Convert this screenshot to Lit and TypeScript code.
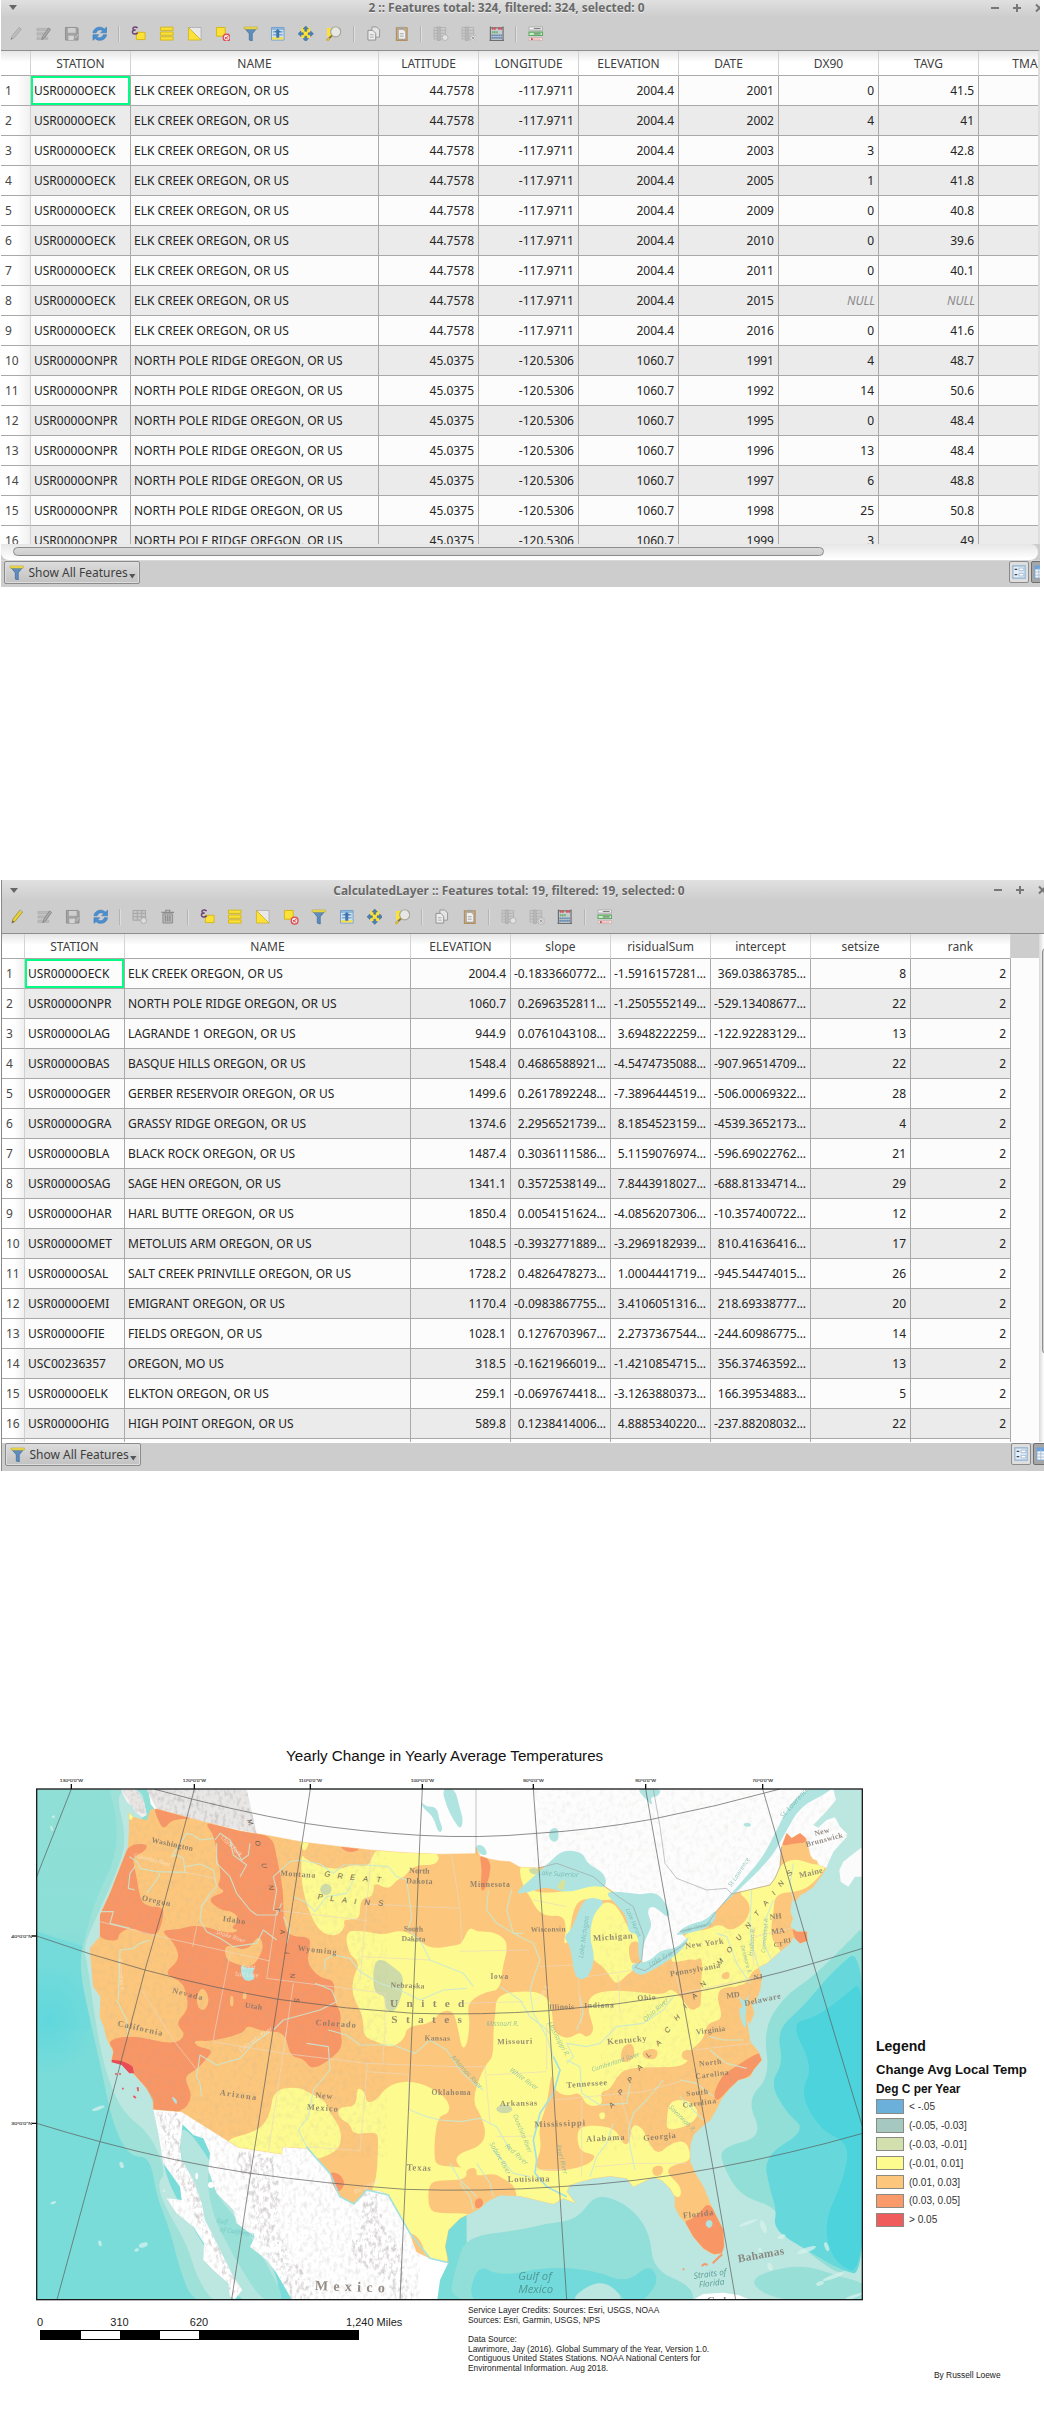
import { LitElement, html, svg, css } from "lit";
import { customElement, property } from "lit/decorators.js";

type Row = string[];

const ICONS: Record<string, any> = {
  pencilOff: svg`<path d="M3 14 L4 10.5 L11.5 1.5 L13.8 3.3 L6.3 12.3Z" fill="#bdbdbd" stroke="#a2a2a2" stroke-width=".8"/><path d="M3 14l.6-2 1.2 1z" fill="#777"/>`,
  pencil: svg`<path d="M3 14.5 L4 10.5 L11.5 1 L14 3 L6.5 12.5Z" fill="#e6d338" stroke="#9b8b2c" stroke-width=".8"/><path d="M11 1.6 12.2.6 14.5 2.4 13.6 3.6z" fill="#b9bcae"/><path d="M3 14.5l.8-2.6 1.8 1.2z" fill="#5b5b4d"/>`,
  multi: svg`<path d="M1 2.5h12v2.4H1zM1 7h10v2.4H1zM1 11.5h11v2.4H1z" fill="#bababa" stroke="#a8a8a8" stroke-width=".6"/><path d="M6 14l1-3.5L13 2l2 1.5L9 12z" fill="#aaa" stroke="#808080" stroke-width=".8"/>`,
  save: svg`<path d="M1.5 1.5h12l1 1v12h-13z" fill="#a2a2a2" stroke="#8e8e8e"/><path d="M4 2h8v5H4z" fill="#cfcfcf"/><path d="M4.500 10h6v4.500h-6z" fill="#d4d4d4"/><path d="M10 14l1-3 3.500-3.500 1.500 1.500L12.500 13z" fill="#b8b8b8" stroke="#8a8a8a" stroke-width=".5"/>`,
  refresh: svg`<path d="M1 7C1.500 3 5 1 8.500 1.200c2 .1 3.400 1 4.300 2L15 1.200V7H9l2-2C9 3 5.500 3.600 4.300 7zM15 9c-.5 4-4 6-7.500 5.800-2-.1-3.400-1-4.300-2L1 14.800V9h6l-2 2c2 2 5.500 1.400 6.700-2z" fill="#4b8fd0" stroke="#3a78b8" stroke-width=".6"/>`,
  tableOff: svg`<path d="M1 1.500h13v10H1z" fill="#c6c6c6" stroke="#a5a5a5"/><path d="M1 4.500h13M1 8h13M5.500 1.500v10M10 1.500v10" stroke="#a5a5a5"/><circle cx="12" cy="12" r="3" fill="#ddd" stroke="#aaa"/>`,
  trash: svg`<path d="M3 5h10v9.500H3z" fill="#b7b7b7" stroke="#8d8d8d"/><path d="M5.700 6.500V13M8 6.500V13M10.300 6.500V13M1.500 3.500h13M6 3V1.300h4V3" fill="none" stroke="#8b8b8b" stroke-width="1.200"/>`,
  epsilon: svg`<path d="M5.500 6.500h9v7.500h-9z" fill="#fbe13a" stroke="#d5b813"/><path d="M6.800 2C4-.2 1.500 1.500 2.200 3.300 2.600 4.200 4 4.200 4.800 4.200 2.500 4.200 1.200 5 1.500 6.600 2 8.900 5.500 8.800 7 7" fill="none" stroke="#6c3f73" stroke-width="1.500"/>`,
  selectAll: svg`<path d="M1.500 1.200h13v3.300h-13zM1.500 6.200h13v3.300h-13zM1.500 11.200h13v3.300h-13z" fill="#fbe13a" stroke="#d5b813"/>`,
  invert: svg`<path d="M1.500 1.500h13v13z" fill="#e9e9e9" stroke="#aaa" stroke-width=".8"/><path d="M1.500 1.500l13 13h-13z" fill="#fbe13a" stroke="#cfb31c" stroke-width=".8"/>`,
  deselect: svg`<path d="M1.500 1.500h9v9h-9z" fill="#fbe13a" stroke="#d5b813"/><circle cx="12" cy="12" r="3.500" fill="#f5dede" stroke="#d94b50" stroke-width="1.300"/><path d="M10 14l4-4M10.300 11.500l3 2" stroke="#d94b50"/>`,
  filter: svg`<path d="M1.500 2h13l-5 6v7.500l-3-1V8z" fill="#5f8dbd" stroke="#416f9f" stroke-width=".8"/><path d="M1.200 1h13.600v2.200H1.200z" fill="#f5e050" stroke="#bba92c" stroke-width=".6"/>`,
  moveTop: svg`<path d="M1.500 1.500h13v13h-13z" fill="#cfe0ee" stroke="#6fa0cc"/><path d="M1.500 3h13M3 6h10M3 9h10" stroke="#7ba9d2" stroke-width="1.500"/><path d="M2 11.500h12V14H2z" fill="#f4de50"/><path d="M8 3l3.500 3.500h-2V12h-3V6.500h-2z" fill="#3f75aa"/>`,
  pan: svg`<path d="M3.500 1.500h9v11h-9z" fill="#fbe13a"/><path d="M8 0l2.800 3H9v2.500H7V3H5.200zM8 16l2.800-3H9v-2.500H7V13H5.200zM0 8l3-2.800V7h2.500v2H3v1.800zM16 8l-3-2.800V7h-2.500v2H13v1.800z" fill="#4b80b7" stroke="#34618f" stroke-width=".5"/>`,
  zoom: svg`<path d="M1 2h7v9H1z" fill="#fbe13a"/><circle cx="10" cy="6" r="5.200" fill="#e7e8e3" stroke="#a5a79d" stroke-width="1.200"/><path d="M6 10l-5 5" stroke="#83713b" stroke-width="2"/><path d="M3.500 12.500l-3 3" stroke="#e0bd34" stroke-width="2"/>`,
  copy: svg`<path d="M6 1h5l3 3v7.500H6z" fill="#e4e4e4" stroke="#979797"/><path d="M2 4.500h5l3 3v7H2z" fill="#ededed" stroke="#8e8e8e"/><path d="M4 9h4M4 11.500h4" stroke="#aaa"/>`,
  paste: svg`<path d="M2.500 1.800h11v13h-11z" fill="#c7ad88" stroke="#b18f60" stroke-width="1.200"/><path d="M4.500 3.500h5l2.500 2.500v7.500H4.500z" fill="#f0f0f0" stroke="#999" stroke-width=".7"/><path d="M5.500.8h5v2.400h-5z" fill="#a5a5a0"/><path d="M6 8h4M6 10.500h4" stroke="#a2a2a2"/>`,
  colAdd: svg`<path d="M1 1.500h12v12H1z" fill="#c9c9c9" stroke="#b4b4b4"/><path d="M1 4.500h12M1 7.500h12M1 10.500h12" stroke="#b3b3b3"/><path d="M4.500 1h3v14h-3z" fill="#b8b8b8" stroke="#a6a6a6" stroke-width=".6"/><circle cx="12.500" cy="12" r="3" fill="#e3e3e3" stroke="#b5b5b5"/>`,
  colDel: svg`<path d="M1 1.500h12v12H1z" fill="#c9c9c9" stroke="#b4b4b4"/><path d="M1 4.500h12M1 7.500h12M1 10.500h12" stroke="#b3b3b3"/><path d="M4.500 1h3v14h-3z" fill="#b8b8b8" stroke="#a6a6a6" stroke-width=".6"/><path d="M9.500 9.500h6v6h-6z" fill="#ddd" stroke="#aaa" stroke-width=".6"/><path d="M11 11l3 3M14 11l-3 3" stroke="#999"/>`,
  abacus: svg`<path d="M1.500 .5v15M14.500 .5v15M.5 14.800h15M1.500 2h13" stroke="#6d7072" stroke-width="1.300"/><path d="M2.500 3h11v11h-11z" fill="#c5cbd0"/><path d="M3 2.700h4M9.500 2.700h4" stroke="#d94d50" stroke-width="2.200" stroke-dasharray="1.700 .5"/><path d="M3 6.500h6" stroke="#69b26e" stroke-width="2.200" stroke-dasharray="1.700 .5"/><path d="M2.500 9.800h11M2.500 12.300h11" stroke="#5a83ad" stroke-width="1.800" stroke-dasharray="1.500 .5"/>`,
  conditional: svg`<path d="M1 1h14v3.200H1z" fill="#f4f4f4" stroke="#a9a9a9" stroke-width=".9"/><path d="M6 2.600h7" stroke="#6a6a6a" stroke-width=".9"/><path d="M1 6.300h14v3.600H1z" fill="#c4f0c2" stroke="#62a866" stroke-width="1.100"/><path d="M6 8.100h7" stroke="#7f9f82" stroke-width="1.800"/><path d="M1 12h14v3H1z" fill="#fbe6e6" stroke="#c9b4b4" stroke-width=".9"/><path d="M3 13.500h2" stroke="#b81a1a" stroke-width="1.400"/><path d="M5 13.500h8" stroke="#eb9a9a" stroke-width=".9"/>`,
  form: svg`<path d="M1 1h14v14H1z" fill="#e4eef8" stroke="#8fb0d0" stroke-width="1.300"/><path d="M3 5h3M3 11h3" stroke="#444" stroke-width="1.500"/><path d="M8 3.500h5.500v3H8zM8 9.500h5.500v3H8z" fill="#fff" stroke="#9bb6d2"/>`,
  grid: svg`<path d="M1 1h14v14H1z" fill="#f2f6fa" stroke="#6f9fd0"/><path d="M1 1h14v4H1z" fill="#6ca3dc"/><path d="M1 8h14M1 11.500h14M5.500 3v12M10 3v12" stroke="#a9bdd0"/>`,
};

const icon = (n: string) => html`<svg class="ico" viewBox="0 0 16 16">${ICONS[n]}</svg>`;

@customElement("attribute-table")
export class AttributeTable extends LitElement {
  @property() title = "";
  @property() variant = "first";
  @property({ attribute: false }) tools: string[] = [];
  @property({ attribute: false }) columns: string[] = [];
  @property({ attribute: false }) rows: Row[] = [];

  static styles = css`
    :host { display: block; font-family: "Noto Sans", sans-serif; font-size: 12px; color: #242424; }
    .win { display: flex; flex-direction: column; background: #cdcdcd; overflow: hidden; margin-left: 1px; }
    .first { width: 1039px; height: 587px; }
    .second { width: 1042px; height: 591px; border-left: 1px solid #898989; }
    .bar { height: 17px; flex: none; display: grid; grid-template-columns: 106px 1fr 134px; background: linear-gradient(#e0e0e0, #cdcdcd); }
    .second .bar { height: 21px; }
    .name { text-align: center; font-weight: 700; font-size: 11.900px; color: #696969; text-shadow: 0 1px 0 #eee; line-height: 15px; white-space: nowrap; }
    .second .name { line-height: 21px; }
    .tri { width: 8px; height: 5px; margin: 5px 0 0 8px; background: #666; clip-path: polygon(0 0, 100% 0, 50% 100%); }
    .second .tri { margin: 8px 0 0 8px; }
    .ctl { display: flex; justify-content: flex-end; height: 15px; margin-right: -10px; }
    .second .ctl { height: 20px; margin-right: -9px; }
    .ctl svg { width: 22px; height: 20px; flex: none; align-self: center; }
    .tools { height: 33px; flex: none; display: flex; align-items: center; padding-left: 1px; }
    .second .tools { height: 32px; }
    .btn { width: 27.850px; display: flex; justify-content: center; flex: none; }
    .ico { width: 15.500px; height: 15.500px; display: block; }
    .sep { width: 11.700px; display: flex; justify-content: center; flex: none; }
    .sep i { width: 1px; height: 16px; background: #b4b4b4; border-right: 1px solid #dedede; }
    .body { border-top: 1px solid #8e8e8e; display: flex; overflow: hidden; flex: none; background: #fcfcfc; }
    .first .body { height: 493px; width: 1037px; border-right: 2px solid #dedede; }
    .second .body { height: 508px; }
    .grid { flex: none; }
    .row { display: grid; height: 30px; }
    .first .row { grid-template-columns: 30px 100px 248px repeat(7, 100px); }
    .second .row { grid-template-columns: 23px 100px 286px repeat(6, 100px); }
    .row.head { height: 25px; background: linear-gradient(#e6e6e6, #fff 11px); }
    .c { border-right: 1px solid #a9a9a9; border-bottom: 1px solid #a9a9a9; padding: 0 3px; line-height: 29px; white-space: pre; box-sizing: border-box; overflow: hidden; background: #fcfcfc; }
    .row:nth-child(odd) .c { background: #ebebeb; }
    .row.head .c { background: none; text-align: center; line-height: 25px; color: #3e3e3e; border-right-color: #d3d3d3; }
    .row .c.idx { background: linear-gradient(90deg, #fff 55%, #f0f0f0); padding-left: 4px; border-right-color: #d0d0d0; color: #484848; }
    .num { text-align: right; padding-right: 4px; }
    .null { text-align: right; font-style: italic; color: #8a8a8a; }
    .c.cur { box-shadow: inset 0 0 0 2px #04fb84; }
    .fill { width: 28px; height: 24px; background: #cdcdcd; }
    .vbar { width: 5px; margin-left: auto; background: linear-gradient(90deg, #d8d8d8, #fff); }
    .vthumb { margin: 14px 0 0 3px; width: 6px; height: 404px; border: 1px solid #8c8c8c; border-radius: 5px; background: #d6d6d6; }
    .hbar { height: 15px; width: 1037px; flex: none; border-radius: 0 8px 8px 8px; background: linear-gradient(#e6e6e6, #fff); border-bottom: 1px solid #fff; }
    .hthumb { margin: 3px 0 0 12px; width: 809px; height: 7px; border: 1px solid #8a8a8a; border-radius: 5px; background: linear-gradient(#dadada, #cdcdcd); }
    .status { flex: 1; display: flex; align-items: flex-start; padding: 0 0 0 3px; border-top: 1px solid #d8d8d8; }
    .second .status { border-top-color: #fff; }
    .show { width: 134px; height: 21px; border: 1px solid #8b8b8b; border-radius: 2px; background: linear-gradient(#dcdcdc, #c2c2c2); display: flex; align-items: center; color: #3e3e3e; box-shadow: inset 0 0 0 1px #ddd; white-space: nowrap; }
    .show .ico { margin: 0 4px 0 4px; flex: none; }
    .drop { width: 7px; height: 5px; background: #555; clip-path: polygon(0 0, 100% 0, 50% 100%); margin: 7px 0 0 1px; flex: none; }
    .views { display: flex; gap: 2px; margin-left: auto; margin-right: -11px; }
    .second .views { margin-right: -9px; }
    .view { width: 18px; height: 20px; border: 1px solid #8b8b8b; border-radius: 2px; background: #dedede; display: flex; align-items: center; justify-content: center; flex: none; }
    .view .ico { width: 14px; height: 14px; }
    .view.on { background: #a6a6a6; border-color: #6f6f6f; }
  `;

  private cell(v: string, i: number, r: number) {
    if (v === "NULL") return html`<div class="c null">${v}</div>`;
    const cls = i === 0 ? "c idx" : i < 3 ? "c" : "c num";
    return html`<div class="${cls}${r === 0 && i === 1 ? " cur" : ""}">${v}</div>`;
  }

  render() {
    const second = this.variant === "second";
    return html`<div class="win ${this.variant}">
      <div class="bar"><div class="tri"></div><div class="name">${this.title}</div>
        <div class="ctl">
          <svg viewBox="0 0 22 20"><path d="M7 10h8" stroke="#777" stroke-width="2"/></svg>
          <svg viewBox="0 0 22 20"><path d="M7 10h8M11 6v8" stroke="#777" stroke-width="2"/></svg>
          <svg viewBox="0 0 22 20"><path d="M8 6.500l7 7M15 6.500l-7 7" stroke="#777" stroke-width="2"/></svg>
        </div></div>
      <div class="tools">${this.tools.map((t) => t === "|" ? html`<div class="sep"><i></i></div>` : html`<div class="btn">${icon(t)}</div>`)}</div>
      <div class="body">
        <div class="grid">
          <div class="row head"><div class="c"></div>${this.columns.map((c) => html`<div class="c">${c}</div>`)}</div>
          ${this.rows.map((row, r) => html`<div class="row">${[String(r + 1), ...row].map((v, i) => this.cell(v, i, r))}</div>`)}
          ${second ? html`<div class="row">${["", "", "", "", "", "", "", "", ""].map((v, i) => this.cell(v, i, 99))}</div>` : ""}
        </div>
        ${second ? html`<div class="fill"></div><div class="vbar"><div class="vthumb"></div></div>` : ""}
      </div>
      ${second ? "" : html`<div class="hbar"><div class="hthumb"></div></div>`}
      <div class="status">
        <div class="show">${icon("filter")}<span>Show All Features</span><i class="drop"></i></div>
        <div class="views"><div class="view">${icon("form")}</div><div class="view on">${icon("grid")}</div></div>
      </div>
    </div>`;
  }
}

const US = "388,248 400,262 440,272 452,240 470,237 620,278 720,303 810,318 910,337 1020,350 1110,360 1210,368 1320,373 1428,371 1428,352 1440,378 1470,388 1500,393 1530,395 1560,412 1615,414 1670,400 1780,440 1815,470 1850,492 1900,530 1930,610 1925,690 1935,722 2000,680 2060,640 2060,625 2040,605 2120,585 2148,545 2195,492 2310,465 2325,445 2340,410 2345,350 2360,310 2375,325 2400,310 2418,325 2430,375 2438,388 2450,392 2455,405 2478,415 2462,440 2450,455 2440,470 2415,488 2400,495 2388,512 2375,510 2370,545 2378,565 2370,590 2390,605 2420,605 2422,632 2400,640 2380,620 2370,640 2345,660 2300,700 2275,712 2285,740 2280,780 2262,822 2250,805 2262,850 2250,880 2240,870 2245,900 2250,935 2275,965 2285,990 2260,1020 2250,1040 2215,1050 2190,1075 2165,1105 2148,1140 2130,1170 2105,1190 2080,1215 2070,1245 2070,1295 2085,1330 2110,1370 2130,1420 2150,1460 2170,1500 2172,1550 2165,1570 2140,1573 2110,1555 2080,1520 2055,1475 2040,1460 2025,1430 2025,1400 2010,1375 1985,1350 1960,1342 1930,1355 1900,1370 1880,1345 1830,1338 1780,1345 1740,1355 1710,1365 1700,1385 1725,1418 1690,1405 1660,1422 1620,1412 1560,1398 1500,1395 1460,1415 1440,1435 1380,1465 1345,1500 1335,1550 1345,1598 1290,1585 1250,1565 1230,1510 1195,1450 1165,1395 1140,1382 1100,1380 1085,1400 1062,1422 1020,1400 1000,1365 990,1330 945,1280 920,1255 847,1250 845,1272 715,1252 680,1230 545,1145 460,1138 460,1110 440,1075 400,1030 370,1005 335,992 340,965 320,925 312,890 300,860 302,800 280,770 275,710 270,655 300,620 300,555 330,490 365,400 385,350 388,300";
const CANADA = "445,178 2500,178 2508,210 2478,245 2440,285 2455,293 2480,270 2505,262 2520,290 2545,315 2500,365 2478,415 2300,560 1900,760 1500,500 900,360 470,245 452,222";
const BAJA = "460,1138 545,1145 548,1180 540,1250 545,1290 580,1350 605,1420 615,1470 650,1540 680,1600 700,1640 727,1680 705,1708 690,1700 685,1660 640,1620 610,1590 612,1540 580,1490 530,1450 500,1405 545,1410 540,1370 490,1300 475,1210";
const MEXICO = "540,1175 580,1215 610,1225 630,1270 625,1320 650,1390 700,1440 710,1480 765,1520 750,1550 800,1590 830,1630 875,1708 1312,1708 1320,1650 1345,1598 1200,1300 900,1200 545,1145";

// Smooths a closed point list into quadratic curves through the edge midpoints.
const blob = (s: string) => {
  const p = s.trim().split(/\s+/).map((q) => q.split(",").map(Number));
  const n = p.length;
  const m = (i: number) => [(p[i % n][0] + p[(i + 1) % n][0]) / 2, (p[i % n][1] + p[(i + 1) % n][1]) / 2];
  let d = `M${m(n - 1).join(",")}`;
  for (let i = 0; i < n; i++) d += `Q${p[i].join(",")} ${m(i).join(",")}`;
  return d + "Z";
};

const YELLOW = [
  "900,330 930,335 915,365 905,355", "380,240 400,240 402,262 388,275",
  "903,372 915,385 940,400 970,412 1020,418 1060,402 1105,412 1120,370 1140,355 1315,360 1316,405 1240,405 1215,440 1190,450 1165,480 1120,455 1122,500 1080,505 1080,570 1040,565 1025,612 985,618 945,590 905,480",
  "1035,600 1100,605 1150,615 1200,600 1240,615 1290,658 1370,645 1386,640 1408,590 1430,605 1480,605 1520,630 1520,670 1510,700 1500,780 1460,785 1420,805 1402,830 1410,880 1400,950 1385,955 1375,900 1360,840 1320,845 1295,880 1220,890 1215,925 1175,955 1130,935 1090,920 1090,870 1080,840 1055,790 1060,740 1080,700 1045,670",
  "1480,900 1485,860 1490,790 1600,782 1640,800 1655,830 1660,900 1680,920 1710,925 1740,905 1760,925 1785,900 1765,850 1765,800 1820,780 1900,785 1990,795 2010,775 2040,795 2070,845 2100,830 2105,780 2100,720 2150,740 2170,725 2230,770 2165,770 2150,800 2165,850 2160,870 2120,880 2110,930 2070,960 2060,1010 1960,1012 1880,1015 1850,1040 1830,1080 1800,1085 1810,1125 1760,1130 1740,1085 1700,1100 1660,1080 1655,1020 1640,1130 1615,1190 1625,1260 1600,1310 1640,1325 1720,1318 1770,1300 1790,1275 1740,1265 1730,1220 1740,1190 1800,1185 1850,1200 1870,1245 1890,1240 1895,1180 1930,1195 1945,1240 1975,1275 2010,1240 2060,1230 2075,1290 2040,1300 2010,1310 2000,1330 2045,1370 2040,1410 2000,1380 1960,1440 1550,1440 1550,1370 1500,1340 1480,1330 1420,1340 1365,1300 1375,1270 1440,1250 1460,1210 1440,1150 1420,1120 1430,1060 1460,1000 1480,980",
  "820,1080 895,1070 930,1090 975,1110 990,1150 1020,1190 1025,1240 1000,1270 945,1290 845,1285 715,1262 670,1230 770,1205 810,1160",
  "1015,1130 1070,1130 1070,1070 1095,1085 1100,1120 1130,1110 1160,1070 1220,1050 1290,1070 1345,1110 1350,1150 1310,1160 1300,1290 1320,1310 1400,1310 1400,1350 1320,1350 1285,1360 1285,1440 1320,1450 1420,1450 1400,1480 1345,1510 1345,1615 1290,1595 1180,1450 1110,1385 1130,1350 1135,1230 1130,1205 1060,1215 1050,1180 1015,1165",
  "1560,402 1620,405 1620,440 1585,485 1680,490 1780,460 1845,480 1850,510 1790,510 1750,505 1720,530 1705,640 1690,640 1700,600 1690,555 1640,560 1610,540 1590,500 1575,480 1560,440",
  "1765,570 1800,520 1840,515 1870,560 1885,600 1930,600 1925,640 1885,640 1890,680 1915,710 1880,735 1850,765 1830,740 1810,710 1765,680",
  "2040,640 2060,605 2120,600 2160,580 2190,605 2240,575 2255,520 2205,480 2310,455 2345,400 2390,385 2440,405 2485,405 2440,460 2400,485 2325,490 2320,550 2310,620 2340,660 2345,670 2300,705 2255,722 2240,765 2180,770 2090,740 2100,680 2000,705",
  "2010,1110 2070,1110 2100,1150 2070,1185 2000,1205 2000,1160", "1795,1150 1815,1145 1815,1165 1802,1170",
];
const DARK = [
  "460,225 590,265 530,268 510,275 490,300 470,262",
  "605,265 815,310 830,380 850,480 850,570 865,620 930,620 930,650 920,700 960,745 1005,750 1000,810 1025,850 1018,890 1030,950 990,990 935,1020 910,985 870,980 855,905 790,905 740,885 730,910 630,935 580,930 590,950 640,960 620,985 590,1020 550,1040 580,1100 545,1150 450,1145 430,1075 380,1020 325,990 345,965 320,930 400,915 520,945 560,915 525,880 565,840 560,790 545,755 490,730 540,690 525,640 480,600 530,600 590,583 690,612 720,600 690,595 720,570 700,545 660,540 620,505 680,485 650,470 665,440 650,380 645,320",
  "375,345 445,340 435,365 395,380 410,440 415,480 430,530 490,530 490,560 475,615 430,612 395,590 355,610 355,635 290,625 295,550 340,470",
  "2140,1090 2165,1040 2190,1020 2285,960 2290,990 2250,1040 2200,1060 2150,1120",
  "2070,1470 2100,1450 2120,1420 2140,1435 2175,1490 2180,1580 2110,1565 2080,1540 2050,1475",
  "1437,370 1472,390 1470,440 1450,488 1440,470 1447,420", "2340,350 2355,300 2405,305 2425,338 2380,340",
  "2375,590 2395,605 2430,600 2425,640 2400,645 2385,630", "980,1325 1020,1330 1038,1365 1005,1395", "1422,1410 1445,1402 1452,1425 1428,1440", "1010,345 1090,352 1050,372",
];
const ORANGE = [
  "675,640 740,665 775,615 790,640 785,670 755,715 700,700 675,685", "592,790 608,772 626,795 625,825 608,845 590,825",
  "690,797 700,797 701,829 690,829", "728,790 740,785 740,808 728,808", "1885,640 1915,630 1925,670 1915,700 1890,700",
  "2085,690 2110,680 2100,800 2105,830 2070,840 2050,790 2030,790 2020,740", "2165,728 2190,725 2188,748 2166,748",
  "1865,950 1900,935 1905,990 1860,1000", "1925,960 1975,955 1970,990 1930,985", "2045,960 2085,960 2080,990 2045,990",
  "1955,1310 1990,1305 1988,1335 1960,1340", "1408,1350 1395,1320 1430,1310 1430,1350", "1230,1500 1270,1540 1272,1580 1240,1560",
  "1035,566 1048,572 1042,590 1030,583",
];
const LAKES = [
  "1540,495 1600,440 1650,395 1690,358 1750,368 1760,400 1815,430 1820,475 1780,465 1700,490 1640,470 1590,485",
  "1715,600 1740,530 1765,500 1820,512 1780,550 1768,620 1785,680 1770,735 1745,752 1722,735 1712,650 1690,620",
  "1812,485 1870,485 1920,495 1970,485 2005,530 2010,570 1960,525 1940,540 1955,580 1950,600 1930,640 1925,705 1915,680 1915,610 1885,610 1880,560 1850,525",
  "1895,700 1950,695 1980,660 2030,655 2070,615 2055,650 2010,690 1950,725 1920,738 1895,720",
  "2025,615 2060,585 2120,570 2150,535 2145,575 2110,600 2040,615",
  "2150,540 2230,450 2290,380 2330,300 2370,220 2430,170 2500,170 2480,190 2400,230 2355,310 2310,390 2200,495",
  "1325,175 1365,175 1378,230 1390,270 1382,300 1360,270 1340,230", "1262,215 1280,230 1310,230 1318,270 1330,300 1315,310 1300,260 1270,235",
  "1910,175 1985,175 1975,200 1950,200 1960,230 1930,200", "1645,300 1675,290 1676,335 1650,335", "2232,278 2255,280 2250,292 2230,288",
  "1425,345 1450,345 1465,375 1440,375", "723,702 740,715 768,712 755,730 768,748 735,755 722,730", "515,1098 532,1110 530,1125 518,1110", "2117,1475 2130,1468 2140,1480 2130,1497 2117,1487",
  "2250,780 2235,850 2240,900 2225,880 2215,830 2232,835 2210,790 2235,820",
];
const RIVERS = [
  "M388,380L412,395 420,415 470,425 555,427 550,385 530,375 515,380 560,310 580,315 600,330 640,325", "M555,410L600,402 640,420 650,470 630,490 605,530 600,570 620,605 660,625 700,650 770,640 790,600 830,630",
  "M645,330L660,310 690,330 700,375 740,405 720,440", "M650,340L650,400 690,440 710,490 750,540 770,555 830,555 845,520", "M690,330L725,390 745,375 750,340", "M820,540L830,480 820,440 870,395 900,390 960,402 1000,430 1030,405 1100,405 1165,410 1190,440 1220,450 1235,560 1225,600 1260,630 1290,690 1340,710 1390,730 1420,770",
  "M880,500L915,515 945,545 980,500 1040,490 1060,450", "M850,560L870,600 860,640", "M975,720L975,690 1000,675 1050,685 1080,725 1140,760 1200,780 1260,810 1330,780 1400,775", "M355,810L360,660 400,655 420,640 450,630", "M350,810L380,870 385,920", "M820,900L850,870 960,840 1010,815 995,780 945,760",
  "M605,1100L600,1060 590,1040 600,975 650,1005 720,985 760,940 810,905", "M920,940L985,950 990,1020 940,1080 925,1160 895,1200 920,1250", "M985,900L1040,915 1080,945 1180,945 1245,970 1290,930 1340,960 1380,1020 1420,1060 1450,1080", "M1230,1140L1280,1160 1320,1170 1380,1175 1440,1165 1490,1190 1530,1260",
  "M1465,480L1460,540 1490,580 1560,620 1600,640 1620,690 1605,730 1590,780 1600,850 1640,920 1660,980 1680,1020 1660,1090 1620,1150 1600,1230 1610,1290 1605,1330 1640,1370 1700,1400", "M1535,480L1520,540 1540,610 1570,610", "M1500,770L1560,810 1590,860 1630,890 1650,910", "M1700,1000L1720,980 1700,940 1760,950 1800,940 1850,890 1930,880 1990,840 2020,800", "M1700,990L1740,1010 1745,1090 1800,1125 1880,1120 1890,1060", "M1730,900L1750,850 1740,800", "M1770,1340L1790,1280 1820,1240 1840,1180", "M1905,1320L1890,1250 1885,1200 1900,1150 1940,1110 1990,1050", "M2110,1170L2080,1140 2040,1100", "M2140,1100L2090,1060 2040,1050", "M2240,1015L2180,1000 2130,960", "M2230,930L2170,930 2130,920",
  "M2275,710L2255,640 2250,580 2255,480", "M2315,690L2290,640 2300,560 2320,510", "M2250,760L2210,700 2180,620 2150,610", "M2380,510L2370,460 2380,400", "M405,480L385,475 390,430 405,410", "M440,490L470,450 480,430", "M300,545L340,545 330,580 390,595", "M1350,1300L1380,1350 1430,1400", "M1430,1300L1470,1360 1480,1400", "M1480,1260L1540,1330 1590,1340", "M1380,1360L1410,1400 1420,1440",
];
const BORDERS = [
  "M300,575L490,622 810,693", "M650,480L600,530", "M557,427L645,445", "M590,590L578,650", "M690,672L645,900 640,930", "M425,780L520,930 595,1025", "M830,540L800,745 1155,790 1155,900 1148,1000", "M820,540L1100,572", "M1115,362L1080,750", "M1100,522L1380,535", "M1090,680L1290,690", "M880,760L850,965", "M640,935L850,970 1100,1000 1370,1010", "M860,900L805,1265", "M1102,1000L1080,1262 920,1250", "M1100,1025L1225,1033 1228,1140", "M1355,375L1380,535 1385,640", "M1380,664L1585,660", "M1380,820L1570,815", "M1350,1010L1455,1010 1470,1180", "M1460,1035L1640,1025", "M1490,1220L1600,1218", "M1610,1320L1690,1318", "M1660,1110L1930,1085 2040,1055", "M1745,1110L1745,1340", "M1860,1090L1900,1230", "M1785,1310L1900,1300 2060,1300", "M1640,880L1640,1020", "M1735,750L1745,880", "M1760,740L1870,725 1900,720", "M1620,710L1720,705", "M1600,510L1700,530", "M2020,700L2040,790 2280,740", "M2080,960L2255,940", "M1855,735L1860,850", "M2260,590L2260,700", "M2265,620L2370,595",
];

type L = [string, number, number, number, number, number?];
const STATES: L[] = [
  ["Washington", 516, 350, 23, 12, 1], ["Oregon", 468, 520, 24, 12, 2], ["Idaho", 702, 578, 24, 8, 2], ["Montana", 894, 440, 24, 4, 2], ["North", 1258, 430, 24, 2], ["Dakota", 1258, 461, 24, 2, 1], ["South", 1240, 604, 23, 2], ["Dakota", 1240, 634, 23, 2], ["Wyoming", 952, 668, 24, 6, 3], ["Nebraska", 1223, 774, 23, 2, 1], ["Nevada", 562, 800, 24, 14, 3], ["Utah", 760, 836, 23, 8, 1], ["Colorado", 1008, 889, 25, 4, 3], ["California", 420, 903, 25, 13, 3], ["Arizona", 715, 1103, 25, 8, 4], ["New", 972, 1105, 25, 4, 2], ["Mexico", 968, 1142, 25, 4, 3], ["Kansas", 1312, 932, 23, 1, 1], ["Oklahoma", 1354, 1096, 23, 0, 2], ["Texas", 1257, 1322, 27, 2, 2], ["Minnesota", 1471, 472, 23, 0, 2], ["Iowa", 1499, 746, 22, 0, 2], ["Wisconsin", 1645, 605, 22, -1, 1], ["Michigan", 1840, 629, 26, -4, 2], ["Illinois", 1685, 838, 23, -1, 1], ["Indiana", 1798, 833, 23, -1, 2], ["Ohio", 1941, 810, 23, -3, 2], ["Missouri", 1545, 942, 24, -1, 2], ["Kentucky", 1882, 938, 25, -5, 2], ["Tennessee", 1762, 1069, 25, -4, 2], ["Arkansas", 1557, 1127, 24, -1, 2], ["Mississippi", 1681, 1189, 26, -2, 3], ["Alabama", 1818, 1232, 25, -3, 3], ["Georgia", 1980, 1228, 25, -5, 2], ["Louisiana", 1587, 1355, 26, -1, 2], ["North", 2132, 1005, 23, -6, 2], ["Carolina", 2138, 1040, 23, -8, 2], ["South", 2093, 1095, 23, -6, 2], ["Carolina", 2100, 1126, 23, -8, 2], ["Virginia", 2133, 908, 23, -7, 1], ["Florida", 2096, 1460, 25, -6, 2], ["New York", 2115, 648, 24, -8, 2], ["Pennsylvania", 2087, 726, 24, -10, 1.5], ["NJ", 2275, 748, 22, -8], ["NH", 2328, 567, 24, -8], ["MA", 2335, 611, 24, -8], ["CT", 2336, 650, 20, -8], ["RI", 2362, 638, 20, -8], ["MD", 2200, 803, 24, -8], ["Delaware", 2290, 816, 24, -12, 2], ["Maine", 2435, 436, 25, -13, 1], ["New", 2468, 312, 23, -15, 1], ["Brunswick", 2475, 336, 23, -15, 1], ["Bahamas", 2285, 1585, 34, -10, 1],
];
const WATER: L[] = [
  ["Lake Superior", 1675, 438, 20, 3], ["Lake Michigan", 1758, 622, 20, -82], ["Lake Huron", 1895, 580, 18, 66], ["Lake Erie", 1985, 692, 20, -28], ["Lake Ontario", 2092, 597, 16, -15], ["St Lawrence", 2222, 430, 19, -56], ["St. Lawrence", 2388, 222, 21, -48], ["Missouri R.", 1508, 888, 20, 0], ["Ohio River", 1972, 845, 21, -42], ["Arkansas River", 1395, 1030, 20, 48], ["White River", 1568, 1052, 20, 36], ["Ouachita River", 1562, 1213, 19, 68], ["Red River", 1545, 1278, 21, 42], ["Sabine River", 1495, 1288, 20, 60], ["Pearl River", 1680, 1290, 19, 76], ["Savannah R.", 2043, 1170, 19, 45], ["Cumberland River", 1848, 1002, 19, -18], ["Hudson R.", 2262, 636, 19, -85], ["Connecticut R.", 2300, 616, 17, -85], ["Delaware R.", 2233, 690, 17, 75], ["Mississippi R.", 1670, 930, 20, 62],
];
const PALE: L[] = [
  ["Columbia River", 455, 395, 17, 15], ["Snake River", 690, 625, 18, 18], ["Great", 745, 718, 17, 0], ["Salt Lake", 740, 740, 18, 3], ["Clark Fork", 690, 352, 18, 45], ["Colorado River", 770, 933, 18, -35], ["Sacramento R.", 358, 735, 15, 86], ["Rio Grande", 1105, 1374, 18, -25], ["Illinois R.", 1630, 798, 18, -55],
];
const GULF: L[] = [["Gulf", 665, 1480, 18, 8], ["of California", 710, 1512, 19, 9]];
const MISC: L[] = [
  ["M", 744, 278, 21, 70], ["O", 766, 342, 21, 75], ["U", 785, 408, 21, 80], ["N", 806, 474, 21, 80], ["T", 824, 540, 21, 84], ["A", 840, 606, 21, 84], ["I", 854, 670, 21, 84], ["N", 870, 738, 21, 84], ["S", 883, 812, 21, 84],
  ["G", 982, 440, 23, 3], ["R", 1020, 446, 23, 3], ["E", 1058, 450, 23, 3], ["A", 1096, 454, 23, 3], ["T", 1136, 456, 23, 3], ["P", 960, 508, 23, 3], ["L", 996, 513, 23, 3], ["A", 1033, 518, 23, 3], ["I", 1065, 522, 23, 3], ["N", 1101, 525, 23, 3], ["S", 1142, 527, 23, 3],
  ["A", 1840, 1130, 22, -45], ["P", 1867, 1092, 22, -45], ["P", 1895, 1055, 22, -45], ["A", 1924, 1018, 22, -45], ["L", 1950, 980, 22, -45], ["A", 1980, 944, 22, -45], ["C", 2007, 905, 22, -45], ["H", 2036, 868, 22, -45], ["I", 2060, 834, 22, -45], ["A", 2088, 803, 22, -45], ["N", 2114, 768, 22, -45], ["M", 2166, 700, 22, -50], ["O", 2194, 664, 22, -50], ["U", 2222, 628, 22, -50], ["N", 2250, 592, 22, -50], ["T", 2276, 556, 22, -50], ["A", 2302, 524, 22, -50], ["I", 2326, 494, 22, -50], ["N", 2348, 466, 22, -50], ["S", 2374, 434, 22, -50],
];
const label = (c: string, l: L) => svg`<text class=${c} text-anchor="middle" font-size=${l[3]} letter-spacing=${l[5] ?? 0} transform="translate(${l[1]} ${l[2]}) rotate(${l[4]})">${l[0]}</text>`;

@customElement("temperature-map")
export class TemperatureMap extends LitElement {
  static styles = css`
    :host { display: block; font-family: "Liberation Sans", Arial, sans-serif; color: #111; }
    .sheet { display: flex; flex-direction: column; height: 686px; }
    .title { margin: 0; padding-left: 286px; font-weight: 400; font-size: 15.200px; line-height: 18px; height: 21px; padding-top: 17px; white-space: nowrap; }
    .main { display: flex; height: 534px; }
    .map { width: 868px; height: 534px; flex: none; }
    .st { font-family: "Liberation Serif", serif; font-weight: 700; fill: #7b7269; opacity: .8; }
    .wa { font-family: "Open Sans", sans-serif; font-style: italic; fill: #5fa8a2; opacity: .65; }
    .pa { font-family: "Open Sans", sans-serif; font-style: italic; fill: #f3ead6; opacity: .75; }
    .gu { font-family: "Open Sans", sans-serif; font-style: italic; fill: #6fcac6; }
    .mi { font-family: "Liberation Sans", sans-serif; font-style: italic; fill: #6b6052; }
    .tick { font-size: 12px; fill: #333; stroke: #333; stroke-width: .3; }
    .legend { padding: 268px 0 0 8px; white-space: nowrap; font-weight: 700; }
    .l1 { font-size: 14px; line-height: 20px; }
    .l2 { font-size: 13.100px; line-height: 20px; margin-top: 4px; }
    .l3 { font-size: 11.900px; line-height: 16px; margin-top: 1px; }
    .item { display: flex; align-items: center; height: 18.900px; gap: 5px; font-weight: 400; font-size: 10.100px; color: #333; }
    .sw { width: 26px; height: 12.500px; border: 1px solid #8b8b84; }
    .foot { display: flex; flex: 1; }
    .scale { width: 427.500px; padding-left: 40px; padding-top: 13px; }
    .nums { display: grid; grid-template-columns: 79.500px 79.500px 147px 60px; height: 15px; font-size: 11px; line-height: 15px; color: #222; }
    .nums span { transform: translateX(-50%); justify-self: start; white-space: nowrap; }
    .nums span:last-child { transform: none; }
    .segs { display: grid; grid-template-columns: 40px 39px 40px 39px 159px; width: 317px; height: 8px; border: 1px solid #000; }
    .segs i:nth-child(odd) { background: #000; }
    .credits { font-size: 8.400px; line-height: 9.650px; padding: 4px 0 0 .5px; width: 466px; white-space: pre; color: #222; }
    .by { font-size: 8.400px; padding-top: 68px; white-space: nowrap; color: #222; }
  `;

  render() {
    const P = (s: string, f: string) => svg`<path d=${blob(s)} fill=${f}/>`;
    const legend = [["#6bb0da", "< -.05"], ["#a5c9c1", "(-0.05, -0.03]"], ["#d2e0ae", "(-0.03, -0.01]"], ["#fdfb8e", "(-0.01, 0.01]"], ["#fcc77c", "(0.01, 0.03]"], ["#fa9a6b", "(0.03, 0.05]"], ["#f05c5c", "> 0.05"]];
    return html`<div class="sheet">
      <h2 class="title">Yearly Change in Yearly Average Temperatures</h2>
      <div class="main">
        <svg class="map" viewBox="0 114 2604 1602">
          <defs>
            <clipPath id="frame"><rect x="110" y="177" width="2477" height="1532"/></clipPath>
            <clipPath id="us"><polygon points=${US}/></clipPath>
            <clipPath id="relief"><polygon points="${MEXICO}"/><polygon points=${BAJA}/><polygon points="440,178 740,178 770,310 620,278 470,237"/><polygon points="365,180 410,180 432,215 440,255 405,245 385,210"/></clipPath>
            <clipPath id="ranges"><path d="M475,1145L540,1150 545,1290 590,1360 615,1470 700,1640 720,1700 690,1690 640,1560 575,1440 500,1260Z"/><path d="M700,1260L830,1280 840,1400 830,1500 880,1590 940,1660 940,1709 870,1709 830,1620 760,1500 740,1380Z"/><path d="M1075,1390L1130,1390 1150,1480 1190,1540 1240,1709 1190,1709 1150,1640 1060,1600 1050,1540 1090,1480Z"/></clipPath>
            <clipPath id="relief2"><polygon points=${CANADA}/></clipPath>
            <filter id="rough" x="0" y="0" width="1" height="1"><feTurbulence type="fractalNoise" baseFrequency=".09 .06" numOctaves="3" seed="4"/><feColorMatrix values="0 0 0 0 .6  0 0 0 0 .57  0 0 0 0 .57  2.400 0 0 0 -1.080"/></filter>
            <filter id="soft" x="0" y="0" width="1" height="1"><feTurbulence type="fractalNoise" baseFrequency=".07 .06" numOctaves="3" seed="9"/><feColorMatrix values="0 0 0 0 .45  0 0 0 0 .4  0 0 0 0 .35  1.300 0 0 0 -.58"/></filter>
            <linearGradient id="west" x1="0" y1="0" x2="0" y2="1"><stop offset="0" stop-color="#8fdfd6"/><stop offset=".27" stop-color="#8cdfd7"/><stop offset=".36" stop-color="#7adcd9"/><stop offset="1" stop-color="#7adcd9"/></linearGradient>
            <radialGradient id="deep"><stop offset="0" stop-color="#60d7dd"/><stop offset="1" stop-color="#60d7dd" stop-opacity="0"/></radialGradient>
          </defs>
          <g clip-path="url(#frame)">
            <rect x="110" y="177" width="1400" height="1540" fill="url(#west)"/>
            <polygon points="110,604 280,660 270,900 110,900" fill="#74dbda"/>
            <ellipse cx="145" cy="870" rx="150" ry="170" fill="url(#deep)"/>
            ${P("320,160 420,178 400,300 380,400 330,520 310,600 270,680 290,820 330,930 360,1010 440,1080 480,1180 480,1300 540,1440 600,1540 650,1620 700,1720 580,1720 540,1620 510,1500 470,1400 450,1280 390,1280 340,1190 300,1000 270,870 235,700 260,600 290,500 350,380 350,250", "#9ee1d8")}
            ${P("345,178 440,178 420,300 390,400 330,560 280,650 310,850 350,990 440,1060 480,1180 490,1330 560,1460 620,1560 720,1720 640,1720 590,1640 560,1540 500,1440 470,1360 500,1330 450,1210 370,1150 320,1040 290,900 262,700 250,650 290,560 370,380 375,300", "#bce7e0")}
            ${P("540,1150 720,1440 880,1720 680,1720 600,1400 540,1300", "#b4e5de")}
            ${P("620,1300 650,1400 740,1500 800,1600 860,1720 790,1720 700,1580 630,1440", "#99e0d8")}
            <rect x="1400" y="1000" width="1200" height="720" fill="#bce7e0"/>
            <rect x="2150" y="177" width="450" height="1100" fill="#bce7e0"/>
            ${P("2600,580 2560,620 2440,740 2350,800 2290,900 2310,1040 2240,1110 2290,1220 2170,1250 2160,1290 2220,1400 2330,1430 2400,1560 2600,1680", "#92dfd8")}
            ${P("2600,640 2500,720 2410,830 2330,900 2350,1000 2310,1060 2360,1150 2420,1200 2290,1280 2310,1380 2330,1440 2320,1500 2420,1560 2520,1620 2600,1640", "#66d8db")}
            ${P("2600,740 2530,800 2450,860 2370,880 2440,1010 2400,1090 2460,1200 2550,1240 2530,1350 2470,1480 2500,1600 2600,1640", "#4cd3db")}
            ${P("1340,1740 1370,1600 1400,1520 1560,1500 1640,1480 1730,1470 1780,1400 1830,1400 1900,1440 1950,1510 1960,1620 2080,1670 2080,1740", "#91dfd8")}
            ${P("1400,1740 1430,1600 1500,1640 1640,1610 1780,1620 1880,1660 1950,1600 1980,1660 1900,1740 1850,1680 1780,1650 1700,1740", "#72dada")}
            ${P("1700,1720 1770,1660 1830,1660 1880,1720", "#bce7e0")}
            ${P("2250,1640 2400,1600 2520,1640 2600,1660 2600,1720 2400,1720 2280,1690", "#98dfd8")}
            ${[[2245, 1478, 30, 5], [2290, 1490, 8, 20], [2345, 1520, 12, 6], [2420, 1560, 30, 7], [2310, 1610, 7, 12], [2500, 1640, 34, 6], [2460, 1660, 12, 6], [2560, 1700, 30, 5], [2280, 1560, 5, 8], [2480, 1550, 6, 14], [365, 1305, 6, 10], [430, 1545, 14, 7], [300, 1540, 5, 9], [410, 1560, 7, 5], [160, 260, 5, 4], [155, 295, 4, 8], [295, 1135, 20, 5], [160, 1418, 9, 4], [492, 1382, 5, 4]].map((e) => svg`<ellipse cx=${e[0]} cy=${e[1]} rx=${e[2]} ry=${e[3]} fill="#d7f2ec" opacity=".75" transform="rotate(-20 ${e[0]} ${e[1]})"/>`)}
            <polygon points=${CANADA} fill="#fdfdfd"/>
            <polygon points="362,178 405,178 418,205 432,215 440,255 428,262 405,245 398,230 380,215" fill="#f4f2f2"/>
            <polygon points="2518,420 2530,395 2555,375 2588,350 2588,440 2565,440 2545,470 2522,455" fill="#fbfbfb"/>
            <polygon points="2535,315 2588,300 2588,318 2550,322" fill="#bce7e0"/>
            <polygon points=${MEXICO} fill="#fff"/><polygon points=${BAJA} fill="#fff"/>
            <polygon points="2080,1709 2110,1692 2170,1688 2215,1695 2250,1709" fill="#fff"/>
            <circle cx="633" cy="1365" r="9" fill="#fff"/><ellipse cx="590" cy="1338" rx="4" ry="10" fill="#fff"/>
            <g clip-path="url(#relief)">
              <rect x="360" y="177" width="420" height="150" fill="#e9e6e6"/>
              <rect x="360" y="177" width="420" height="150" filter="url(#rough)"/>
              <rect x="460" y="1138" width="800" height="571" filter="url(#rough)" opacity=".42"/>
              <g clip-path="url(#ranges)"><rect x="460" y="1138" width="800" height="571" filter="url(#rough)" opacity=".9"/></g>
            </g>
            <rect x="1600" y="177" width="1000" height="500" filter="url(#soft)" clip-path="url(#relief2)" opacity=".22"/>
            <polygon points=${US} fill="#fcc77c" stroke="#fcc77c" stroke-width="2"/>
            <g clip-path="url(#us)">
              ${YELLOW.map((s) => P(s, "#fdfb90"))}
              ${DARK.map((s) => P(s, "#f89666"))}
              ${ORANGE.map((s) => P(s, "#fcc77c"))}
              ${P("1120,700 1145,685 1185,715 1210,735 1208,790 1185,848 1155,840 1155,795 1120,790", "#cedba9")}
              <circle cx="978" cy="478" r="17" fill="#cedba9"/><ellipse cx="1513" cy="1137" rx="24" ry="13" fill="#cedba9"/>
              ${P("1585,414 1620,414 1612,436 1590,430", "#cedba9")}
              <rect x="260" y="230" width="900" height="1050" filter="url(#soft)" opacity=".3"/>
              <rect x="1800" y="560" width="600" height="700" filter="url(#soft)" opacity=".22"/>
            </g>
            ${LAKES.map((s) => P(s, "#b0e4e0"))}
            ${P("1665,475 1690,445 1698,455 1690,475 1700,480", "#d7e29b")}
            <path d="M335,990Q370,988 398,1010L402,1030 388,1030 365,1005 335,997Z" fill="#e84c55"/>
            <path d="M345,1032h6m6,0h6M366,1076h5M410,1074h4v10M400,1098l8,6" stroke="#e9555a" stroke-width="5" fill="none"/>
            <path d="M2048,1618h5M2105,1608l8,-6 10,2M2138,1600l15,-15 14,-12" stroke="#f89666" stroke-width="6" fill="none"/>
            <g fill="none" stroke="#e9d9c3" stroke-width="2.500" opacity=".8">${BORDERS.map((d) => svg`<path d=${d}/>`)}</g>
            <g fill="none" stroke="#c9e8d4" stroke-width="3.500" stroke-linejoin="round" opacity=".85">${RIVERS.map((d) => svg`<path d=${d}/>`)}</g>
            <path d="M1660,980L1680,1020 1660,1090 1620,1150 1600,1230 1610,1290 1605,1330 1640,1370 1700,1400M920,1250L945,1280 990,1330 1020,1400 1062,1422 1100,1380 1165,1395 1230,1510 1290,1585 1345,1598" fill="none" stroke="#a6e1df" stroke-width="5"/>
            <path d="M1428,178V371M1615,414L1670,400 1780,440 1815,470 1855,500 1900,530 1932,620 1925,690 1905,712 1935,722 2000,680 2060,637M2040,605L2120,585 2148,545 2195,492 2310,465 2325,445 2340,410 2345,350M1960,178L1980,290 1995,400 2030,445 2120,480 2180,475 2195,492" fill="none" stroke="#9b9b9b" stroke-width="2.500" opacity=".7"/>
            ${WATER.map((l) => label("wa", l))}${PALE.map((l) => label("pa", l))}${GULF.map((l) => label("gu", l))}${STATES.map((l) => label("st", l))}${MISC.map((l) => label("mi", l))}
            <g class="st"><text x="1170" y="831" font-size="34" letter-spacing="25">United</text><text x="1174" y="880" font-size="34" letter-spacing="25">States</text>
            <text x="944" y="1680" font-size="42" letter-spacing="16" transform="rotate(2 944 1680)">Mexico</text><text x="2120" y="1722" font-size="34" letter-spacing="3">Cuba</text></g>
            <g font-family="Open Sans, sans-serif" font-style="italic" fill="#4a8e8b" opacity=".85" text-anchor="middle"><text x="1605" y="1650" font-size="34">Gulf of</text><text x="1607" y="1689" font-size="34">Mexico</text><text x="2131" y="1640" font-size="25" transform="rotate(-7 2131 1640)">Straits of</text><text x="2136" y="1668" font-size="25" transform="rotate(-7 2136 1668)">Florida</text></g>
            <g fill="none" stroke="#5c5c5c" stroke-width="2.600" opacity=".8">
              <path d="M214,177L110,440"/><path d="M583,177L487,540 435,720 300,1235 171,1709"/><path d="M931,177L915,280 835,800 752,1330 695,1709"/><path d="M1267,177L1260,320 1238,850 1215,1380 1200,1709"/><path d="M1600,177L1610,315 1647,850 1678,1370 1700,1709"/><path d="M1937,177L1953,270 2065,900 2140,1320 2207,1709"/><path d="M2288,177L2440,700 2500,900 2588,1192"/>
              <path d="M465,178Q690,240 915,280Q1080,305 1260,316Q1440,326 1610,310Q1780,300 1955,268Q2150,230 2340,177"/><path d="M110,618Q270,675 435,720Q630,772 835,808Q1040,838 1240,850Q1440,856 1647,842Q1850,826 2050,793Q2250,755 2440,700L2588,655"/><path d="M110,1180Q200,1208 300,1235Q520,1295 752,1330Q980,1362 1215,1378Q1450,1386 1680,1370Q1910,1358 2140,1315Q2380,1270 2588,1210"/>
            </g>
          </g>
          <rect x="110" y="177" width="2477" height="1532" fill="none" stroke="#1c1c1c" stroke-width="4"/>
          <path d="M214,162v15M583,162v15M931,162v15M1267,162v15M1600,162v15M1937,162v15M2288,162v15M96,618h14M96,1180h14" stroke="#111" stroke-width="4"/>
          <g class="tick" text-anchor="middle">${[[214, "130"], [583, "120"], [931, "110"], [1267, "100"], [1600, "90"], [1937, "80"], [2288, "70"]].map(([x, t]) => svg`<text x=${x} y="157" textLength=${String(t).length === 3 ? 70 : 62} lengthAdjust="spacingAndGlyphs">${t}°0'0"W</text>`)}<text x="65" y="623" textLength="62" lengthAdjust="spacingAndGlyphs">40°0'0"N</text><text x="65" y="1184" textLength="62" lengthAdjust="spacingAndGlyphs">30°0'0"N</text></g>
        </svg>
        <div class="legend">
          <div class="l1">Legend</div><div class="l2">Change Avg Local Temp</div><div class="l3">Deg C per Year</div>
          ${legend.map(([c, t]) => html`<div class="item"><i class="sw" style="background:${c}"></i>${t}</div>`)}
        </div>
      </div>
      <div class="foot">
        <div class="scale"><div class="nums"><span>0</span><span>310</span><span>620</span><span>1,240 Miles</span></div><div class="segs"><i></i><i></i><i></i><i></i><i></i></div></div>
        <div class="credits">Service Layer Credits: Sources: Esri, USGS, NOAA
Sources: Esri, Garmin, USGS, NPS
${"\n"}<div class="src">Data Source:
Lawrimore, Jay (2016). Global Summary of the Year, Version 1.0.
Contiguous United States Stations. NOAA National Centers for
Environmental Information. Aug 2018.</div></div>
        <div class="by">By Russell Loewe</div>
      </div>
    </div>`;
  }
}

const eck = (y: string, d: string, t: string): Row => ["USR0000OECK", "ELK CREEK OREGON, OR US", "44.7578", "-117.9711", "2004.4", y, d, t, ""];
const npr = (y: string, d: string, t: string): Row => ["USR0000ONPR", "NORTH POLE RIDGE OREGON, OR US", "45.0375", "-120.5306", "1060.7", y, d, t, ""];
const T1: Row[] = [
  eck("2001", "0", "41.5"), eck("2002", "4", "41"), eck("2003", "3", "42.8"), eck("2005", "1", "41.8"), eck("2009", "0", "40.8"), eck("2010", "0", "39.6"), eck("2011", "0", "40.1"), eck("2015", "NULL", "NULL"), eck("2016", "0", "41.6"),
  npr("1991", "4", "48.7"), npr("1992", "14", "50.6"), npr("1995", "0", "48.4"), npr("1996", "13", "48.4"), npr("1997", "6", "48.8"), npr("1998", "25", "50.8"), npr("1999", "3", "49"),
];
const T2: Row[] = `USR0000OECK|ELK CREEK OREGON, OR US|2004.4|-0.1833660772…|-1.5916157281…|369.03863785…|8
USR0000ONPR|NORTH POLE RIDGE OREGON, OR US|1060.7|0.2696352811…|-1.2505552149…|-529.13408677…|22
USR0000OLAG|LAGRANDE 1 OREGON, OR US|944.9|0.0761043108…|3.6948222259…|-122.92283129…|13
USR0000OBAS|BASQUE HILLS OREGON, OR US|1548.4|0.4686588921…|-4.5474735088…|-907.96514709…|22
USR0000OGER|GERBER RESERVOIR OREGON, OR US|1499.6|0.2617892248…|-7.3896444519…|-506.00069322…|28
USR0000OGRA|GRASSY RIDGE OREGON, OR US|1374.6|2.2956521739…|8.1854523159…|-4539.3652173…|4
USR0000OBLA|BLACK ROCK OREGON, OR US|1487.4|0.3036111586…|5.1159076974…|-596.69022762…|21
USR0000OSAG|SAGE HEN OREGON, OR US|1341.1|0.3572538149…|7.8443918027…|-688.81334714…|29
USR0000OHAR|HARL BUTTE OREGON, OR US|1850.4|0.0054151624…|-4.0856207306…|-10.357400722…|12
USR0000OMET|METOLUIS ARM OREGON, OR US|1048.5|-0.3932771889…|-3.2969182939…|810.41636416…|17
USR0000OSAL|SALT CREEK PRINVILLE OREGON, OR US|1728.2|0.4826478273…|1.0004441719…|-945.54474015…|26
USR0000OEMI|EMIGRANT OREGON, OR US|1170.4|-0.0983867755…|3.4106051316…|218.69338777…|20
USR0000OFIE|FIELDS OREGON, OR US|1028.1|0.1276703967…|2.2737367544…|-244.60986775…|14
USC00236357|OREGON, MO US|318.5|-0.1621966019…|-1.4210854715…|356.37463592…|13
USR0000OELK|ELKTON OREGON, OR US|259.1|-0.0697674418…|-3.1263880373…|166.39534883…|5
USR0000OHIG|HIGH POINT OREGON, OR US|589.8|0.1238414006…|4.8885340220…|-237.88208032…|22`.split("\n").map((l) => [...l.split("|"), "2"]);

@customElement("app-root")
export class AppRoot extends LitElement {
  static styles = css`
    :host { display: block; width: 1044px; height: 2416px; overflow: hidden; background: #fff; }
    .page { display: flex; flex-direction: column; }
    .one { height: 880px; }
    .two { height: 850px; }
  `;
  render() {
    const select = ["epsilon", "selectAll", "invert", "deselect", "filter", "moveTop", "pan", "zoom", "|", "copy", "paste", "|", "colAdd", "colDel", "abacus", "|", "conditional"];
    return html`<div class="page">
      <attribute-table class="one" variant="first" title="2 :: Features total: 324, filtered: 324, selected: 0"
        .tools=${["pencilOff", "multi", "save", "refresh", "|", ...select]}
        .columns=${["STATION", "NAME", "LATITUDE", "LONGITUDE", "ELEVATION", "DATE", "DX90", "TAVG", "TMAX"]} .rows=${T1}></attribute-table>
      <attribute-table class="two" variant="second" title="CalculatedLayer :: Features total: 19, filtered: 19, selected: 0"
        .tools=${["pencil", "multi", "save", "refresh", "|", "tableOff", "trash", "|", ...select]}
        .columns=${["STATION", "NAME", "ELEVATION", "slope", "risidualSum", "intercept", "setsize", "rank"]} .rows=${T2}></attribute-table>
      <temperature-map></temperature-map>
    </div>`;
  }
}
